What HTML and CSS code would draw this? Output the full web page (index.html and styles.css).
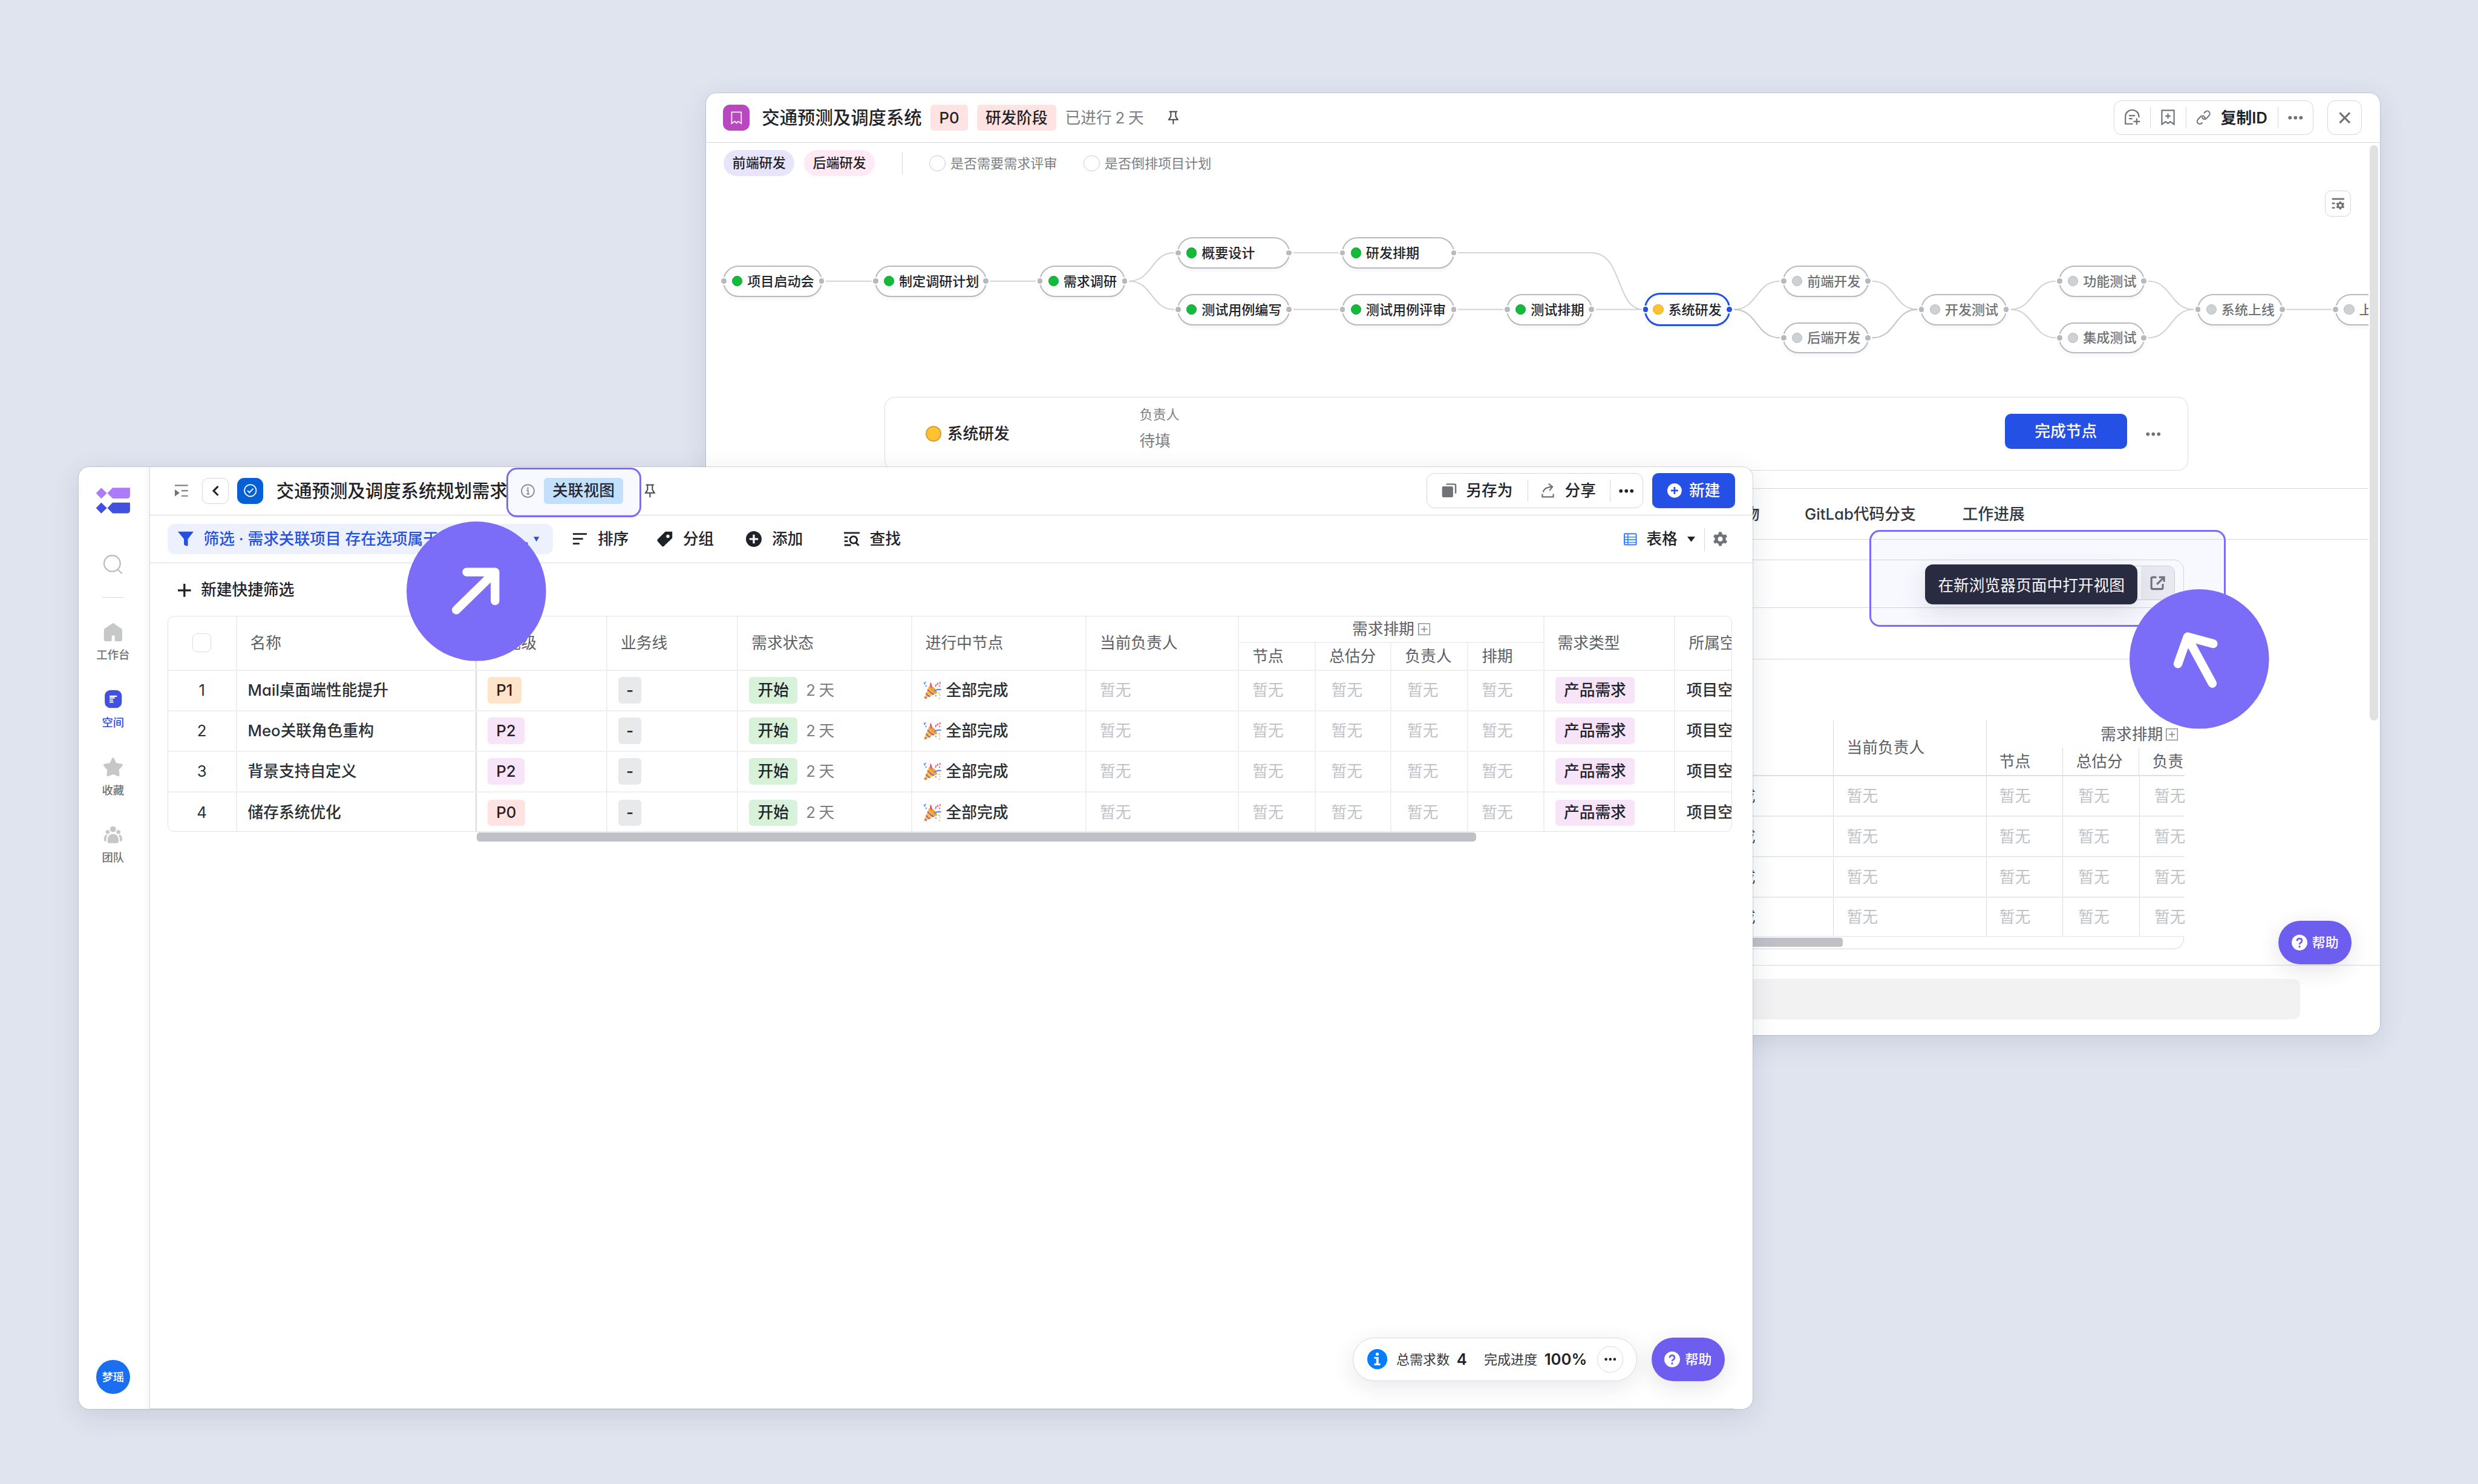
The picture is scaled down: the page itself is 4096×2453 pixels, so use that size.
FILE: index.html
```html
<!DOCTYPE html>
<html lang="zh-CN">
<head>
<meta charset="utf-8">
<title>交通预测及调度系统</title>
<link rel="stylesheet" href="styles.css">
</head>
<body>
<svg class="defs" aria-hidden="true">
  <symbol id="i-party" viewBox="0 0 42 42">
    <path d="M1 41 13 11Q27 17 31 27Z" fill="#fcc43b"/>
    <path d="M10 18Q17 27 25 30M6.500 27Q10 33 16 35M3.500 35Q5 38 8 39" fill="none" stroke="#a44fc4" stroke-width="2.600"/>
    <ellipse cx="22.500" cy="19" rx="5" ry="12" transform="rotate(-45 22.500 19)" fill="#f0a234"/>
    <path d="M17 13Q14 8 17 2Q21 7 20 16" fill="#ee4a72"/>
    <path d="M25 22Q33 17 41 19" fill="none" stroke="#4d8ff0" stroke-width="3"/>
    <path d="M2 2 4 7M6 9 7 12M5 1 6 3M28 32 30 34" stroke="#4d8ff0" stroke-width="2.600"/>
    <path d="M28 12 30 6M33 3 33 8M39 1 38 6M36 10 39 11" stroke="#f05a7e" stroke-width="2.600"/>
    <path d="M35 26 38 28M39 31 38 33M37 37 37 40" stroke="#f0a060" stroke-width="2.200"/>
  </symbol>
  <symbol id="i-pin" viewBox="0 0 28 34">
    <path d="M4 2H24M8 2V14L3 22H25L20 14V2M14 22V33" fill="none" stroke="currentColor" stroke-width="3"/>
  </symbol>
  <symbol id="i-dots" viewBox="0 0 34 10">
    <circle cx="4.500" cy="5" r="4"/><circle cx="17" cy="5" r="4"/><circle cx="29.500" cy="5" r="4"/>
  </symbol>
  <symbol id="i-plusbox" viewBox="0 0 28 28">
    <path d="M1 1H27V27H1ZM14 7V21M7 14H21" fill="none" stroke="#8f959c" stroke-width="2.400"/>
  </symbol>
  <symbol id="i-help" viewBox="0 0 36 36">
    <circle cx="18" cy="18" r="18" fill="#fff"/>
    <path d="M12.500 14.500Q12.500 9 18 9T23.500 14Q23.500 17 20.500 18.500Q18 20 18 22.500" fill="none" stroke="#6d5ef0" stroke-width="3.800"/>
    <circle cx="18" cy="27.500" r="2.400" fill="#6d5ef0"/>
  </symbol>
  <symbol id="i-gear" viewBox="0 0 32 32">
    <path fill-rule="evenodd" d="M13 0H19L20.200 4.600L24 6.800L28.700 5.500L31.700 10.500L28.400 14V18L31.700 21.500L28.700 26.500L24 25.200L20.200 27.400L19 32H13L11.800 27.400L8 25.200L3.300 26.500L.3 21.500L3.600 18V14L.3 10.500L3.300 5.500L8 6.800L11.800 4.600ZM16 10.500A5.500 5.500 0 1 0 16 21.500A5.500 5.500 0 1 0 16 10.500Z"/>
  </symbol>
</svg>

<!-- project detail window -->
<section class="window window-back">
  <header class="detail-head">
    <span class="app-icon purple"><svg viewBox="0 0 26 30"><path d="M2 2H24V28L17 23L13 27L9 23L2 28Z" fill="none" stroke="#fff" stroke-width="2.400"/></svg></span>
    <h1 class="title">交通预测及调度系统</h1>
    <span class="tag red">P0</span>
    <span class="tag red stage">研发阶段</span>
    <span class="elapsed">已进行 2 天</span>
    <svg class="pin"><use href="#i-pin"/></svg>
    <div class="btn-group detail-actions">
      <span class="seg s1"><svg class="ic38" viewBox="0 0 38 36"><path d="M20 33H3V16A15.500 15 0 0 1 34 16V18M11 14H25M11 21H19M29 20V35M21.500 27.500H36.500" fill="none" stroke="#6f7276" stroke-width="3"/></svg></span>
      <span class="seg s2"><svg class="ic32" viewBox="0 0 32 36"><path d="M2 2H30V34L21 28L16 32L11 28L2 34ZM16 9V21M10 15H22" fill="none" stroke="#6f7276" stroke-width="3"/></svg></span>
      <span class="seg s3"><svg class="ic34" viewBox="0 0 34 34"><g fill="none" stroke="#6f7276" stroke-width="2.800"><rect x="-6" y="-10.500" width="12" height="21" rx="6" transform="translate(11.500 22.500) rotate(42)" stroke-dasharray="46 9" stroke-dashoffset="-16"/><rect x="-6" y="-10.500" width="12" height="21" rx="6" transform="translate(22.500 11.500) rotate(42)" stroke-dasharray="46 9" stroke-dashoffset="14"/></g></svg>复制ID</span>
      <span class="seg s4"><svg class="dots gray"><use href="#i-dots"/></svg></span>
    </div>
    <span class="close"><svg viewBox="0 0 28 28"><path d="M2 2 26 26M26 2 2 26" stroke="#6f7276" stroke-width="4.400"/></svg></span>
  </header>
  <div class="detail-body">
    <div class="role-row">
      <span class="role lilac">前端研发</span>
      <span class="role pink">后端研发</span>
      <span class="vline"></span>
      <span class="option"><i></i>是否需要需求评审</span>
      <span class="option"><i></i>是否倒排项目计划</span>
    </div>
    <div class="flow">
      <svg class="links" viewBox="0 0 3814 489">
        <g fill="none" stroke="#d0d3d6" stroke-width="2.800">
          <path d="M275 223H380M652 223H757"/>
          <path d="M970 223C1025 223 1020 158 1074 158M970 223C1025 223 1020 288 1074 288"/>
          <path d="M1347 158H1451M1347 288H1451M1725 288H1829M2041 288H2150"/>
          <path d="M1725 158H2030C2105 158 2085 288 2150 288"/>
          <path d="M2358 288C2412 288 2408 223 2463 223"/>
          <path d="M2358 288C2412 288 2408 353 2463 353" stroke="#bfc2c7"/>
          <path d="M2675 223C2730 223 2725 288 2779 288"/>
          <path d="M2675 353C2730 353 2725 288 2779 288" stroke="#bfc2c7"/>
          <path d="M2992 288C3046 288 3042 223 3096 223M2992 288C3046 288 3042 353 3096 353"/>
          <path d="M3308 223C3362 223 3358 288 3413 288M3308 353C3362 353 3358 288 3413 288"/>
          <path d="M3625 288H3729"/>
        </g>
      </svg>
      <span class="node" style="--x:40;--y:223;--w:227"><i></i>项目启动会</span>
      <span class="node" style="--x:388;--y:223;--w:256"><i></i>制定调研计划</span>
      <span class="node" style="--x:765;--y:223;--w:197"><i></i>需求调研</span>
      <span class="node" style="--x:1082;--y:158;--w:257"><i></i>概要设计</span>
      <span class="node" style="--x:1082;--y:288;--w:257"><i></i>测试用例编写</span>
      <span class="node" style="--x:1459;--y:158;--w:258"><i></i>研发排期</span>
      <span class="node" style="--x:1459;--y:288;--w:258"><i></i>测试用例评审</span>
      <span class="node" style="--x:1837;--y:288;--w:196"><i></i>测试排期</span>
      <span class="node active" style="--x:2153;--y:288;--w:197"><i></i>系统研发</span>
      <span class="node todo" style="--x:2471;--y:223;--w:196"><i></i>前端开发</span>
      <span class="node todo" style="--x:2471;--y:353;--w:196"><i></i>后端开发</span>
      <span class="node todo" style="--x:2787;--y:288;--w:197"><i></i>开发测试</span>
      <span class="node todo" style="--x:3104;--y:223;--w:196"><i></i>功能测试</span>
      <span class="node todo" style="--x:3104;--y:353;--w:196"><i></i>集成测试</span>
      <span class="node todo" style="--x:3421;--y:288;--w:196"><i></i>系统上线</span>
      <span class="node todo" style="--x:3737;--y:288;--w:196"><i></i>上线验收</span>
      <span class="flow-setting"><svg viewBox="0 0 32 28"><path d="M1 2.500H31M1 13H8M1 24H8" stroke="#6f7276" stroke-width="4"/><g transform="translate(11 8) scale(.64)" fill="#6f7276"><use href="#i-gear" width="32" height="32"/></g></svg></span>
    </div>
    <div class="stage-card">
      <i class="stage-dot"></i>
      <b class="stage-name">系统研发</b>
      <div class="owner"><span>负责人</span><em>待填</em></div>
      <span class="finish">完成节点</span>
      <svg class="dots gray"><use href="#i-dots"/></svg>
    </div>
    <nav class="tabs"><span>交付物</span><span>GitLab代码分支</span><span>工作进展</span></nav>
    <div class="panel">
      <div class="panel-bar">
        <span class="open-btn"><svg viewBox="0 0 36 34"><path d="M15 3H6Q3 3 3 6V28Q3 31 6 31H27Q30 31 30 28V19M21 3H33V14M33 3 16 20" fill="none" stroke="#6f7276" stroke-width="4.500"/></svg></span>
      </div>
      <div class="panel-sub"></div>
      <div class="mini">
        <div class="mini-head"><span></span><span></span><span class="tall">当前负责人</span>
          <div class="mini-group"><div class="mini-top">需求排期<svg class="plusbox"><use href="#i-plusbox"/></svg></div>
            <div class="mini-subs"><span>节点</span><span>总估分</span><span>负责人</span></div></div>
        </div>
        <div class="mini-row"><span></span><span class="done"><svg><use href="#i-party"/></svg>全部完成</span><span>暂无</span><span>暂无</span><span>暂无</span><span>暂无</span></div>
        <div class="mini-row"><span></span><span class="done"><svg><use href="#i-party"/></svg>全部完成</span><span>暂无</span><span>暂无</span><span>暂无</span><span>暂无</span></div>
        <div class="mini-row"><span></span><span class="done"><svg><use href="#i-party"/></svg>全部完成</span><span>暂无</span><span>暂无</span><span>暂无</span><span>暂无</span></div>
        <div class="mini-row"><span></span><span class="done"><svg><use href="#i-party"/></svg>全部完成</span><span>暂无</span><span>暂无</span><span>暂无</span><span>暂无</span></div>
      </div>
      <div class="mini-scroll"></div>
    </div>
    <i class="vscroll"></i>
  </div>
  <footer class="comment"><div></div></footer>
  <span class="help"><svg><use href="#i-help"/></svg>帮助</span>
  <span class="tooltip">在新浏览器页面中打开视图</span>
  <span class="halo halo-open"></span>
</section>
<svg class="badge badge-right" viewBox="0 0 320 320"><circle cx="160" cy="160" r="160"/><path d="M190 216 133 111M111 171 133 109 192 125"/></svg>

<!-- related view window -->
<section class="window window-front">
  <aside class="side">
    <svg class="logo" viewBox="0 0 80 60"><path d="M1 13 13 .5 26 13 13 25.500ZM27 13 39 .5H79V19Q78 25 72 25H39Z" fill="#ab7bfb"/><path d="M1 47 13 34.500 26 47 13 59.500ZM27 47 39 34.500H79V53Q78 59 72 59H39Z" fill="#4150de"/></svg>
    <svg class="search" viewBox="0 0 44 44"><circle cx="20" cy="20" r="18.500" fill="none" stroke="#b6b9bf" stroke-width="3"/><path d="M32 33 42.500 43" stroke="#b6b9bf" stroke-width="3"/></svg>
    <i class="side-line"></i>
    <div class="side-item"><svg viewBox="0 0 44 44"><path d="M22 1 41 14Q43 15.500 43 18V39Q43 43 39 43H28Q26 43 26 41V30H19V41Q19 43 17 43H5Q1 43 1 39V18Q1 15.500 3 14Z" fill="#c6c7c9"/></svg><span>工作台</span></div>
    <div class="side-item on"><svg viewBox="0 0 44 44"><rect x="3" y="1" width="39" height="41" rx="13" fill="#4150de"/><path d="M14 15H31M14 19H26M14 24H22M14 28.500H23" stroke="#fff" stroke-width="3"/></svg><span>空间</span></div>
    <div class="side-item"><svg viewBox="0 0 44 44"><path d="M20 1.500Q22-1 24 1.500L29.500 13 42 15Q46 16.500 43 20L35.500 28.500 37 41Q36.500 44 33 43L22 39 11 43Q7.500 44 7.500 41L8.500 28.500 1 20Q-1.500 16.500 2 15L14.500 13Z" fill="#c6c7c9"/></svg><span>收藏</span></div>
    <div class="side-item"><svg viewBox="0 0 48 44"><g fill="#c6c7c9"><circle cx="24" cy="8" r="7.500"/><circle cx="10.500" cy="15" r="5"/><circle cx="37.500" cy="15" r="5"/><path d="M10 38Q10 20 24 20T38 38Q38 43 33 43H15Q10 43 10 38ZM10 22Q6 30 7 38H2Q-1 28 6 22ZM38 22Q42 30 41 38H46Q49 28 42 22Z"/></g></svg><span>团队</span></div>
    <span class="avatar">梦瑶</span>
  </aside>
  <main class="main">
    <header class="view-head">
      <svg class="fold" viewBox="0 0 30 28"><path d="M0 2H30M15 14H30M15 26H30" stroke="#7d8084" stroke-width="3"/><path d="M0 11 11 19 0 27Z" fill="#6f7276"/></svg>
      <span class="back"><svg viewBox="0 0 16 26"><path d="M14 2 3 13 14 24" fill="none" stroke="#1f2329" stroke-width="4.500"/></svg></span>
      <span class="app-icon blue"><svg viewBox="0 0 30 30"><circle cx="15" cy="15" r="13.500" fill="none" stroke="#fff" stroke-width="2.400"/><path d="M8.500 15 13 19.500 21.500 10.500" fill="none" stroke="#fff" stroke-width="2.600"/></svg></span>
      <h1 class="title">交通预测及调度系统规划需求</h1>
      <svg class="info" viewBox="0 0 32 32"><circle cx="16" cy="16" r="14.500" fill="none" stroke="#85888c" stroke-width="2.400"/><path d="M13 14H16.500V23M13 23H20" fill="none" stroke="#85888c" stroke-width="2.400"/><circle cx="16" cy="9.500" r="1.900" fill="#85888c"/></svg>
      <span class="tag sky">关联视图</span>
      <svg class="pin"><use href="#i-pin"/></svg>
      <div class="btn-group view-actions">
        <span class="seg a1"><svg viewBox="0 0 34 34"><path d="M11 2H30Q33 2 33 5V24" fill="none" stroke="#6f7276" stroke-width="3.500"/><rect x="1" y="7" width="26" height="26" rx="3" fill="#6f7276"/></svg>另存为</span>
        <span class="seg a2"><svg viewBox="0 0 32 34"><path d="M4 21Q6 9 26 8M17 1 26 8 19 17M2 25V32H28V25" fill="none" stroke="#6f7276" stroke-width="3.200"/></svg>分享</span>
        <span class="seg a3"><svg class="dots"><use href="#i-dots"/></svg></span>
      </div>
      <span class="create"><svg viewBox="0 0 32 32"><circle cx="16" cy="16" r="16" fill="#fff"/><path d="M16 8V24M8 16H24" stroke="#2450e5" stroke-width="3.600"/></svg>新建</span>
    </header>
    <div class="toolbar">
      <div class="filter"><svg class="funnel" viewBox="0 0 36 36"><path d="M0 1H36L23 18V33Q21 36 14 31V18Z" fill="#2450e5"/></svg><span class="filter-text">筛选 · 需求关联项目 存在选项属于 交通预测</span><span class="more-text">...</span><svg class="caret" viewBox="0 0 14 12"><path d="M0 0H14L7 12Z" fill="#2450e5"/></svg></div>
      <span class="tool t1"><svg viewBox="0 0 36 36"><path d="M0 5H36M0 17.500H26M0 30H17" stroke="#1f2329" stroke-width="4.600"/></svg>排序</span>
      <span class="tool t2"><svg viewBox="0 0 36 36"><path fill-rule="evenodd" d="M19 1H35L35 16L15 35Q13 36 11 34L1 23Q0 21 1 19ZM25 8A3.800 3.800 0 1 0 25 15.600A3.800 3.800 0 1 0 25 8Z" fill="#1f2329"/></svg>分组</span>
      <span class="tool t3"><svg viewBox="0 0 36 36"><circle cx="18" cy="18" r="18" fill="#1f2329"/><path d="M18 8V28M8 18H28" stroke="#fff" stroke-width="4.400"/></svg>添加</span>
      <span class="tool t4"><svg viewBox="0 0 36 36"><g fill="none" stroke="#1f2329" stroke-width="4"><path d="M0 4H36M1 14H9M1 23H9M1 32H16"/><circle cx="22" cy="20" r="8"/><path d="M27 26 34 33"/></g></svg>查找</span>
      <span class="mode"><svg class="grid-ic" viewBox="0 0 32 30"><rect x="1.500" y="1.500" width="29" height="27" rx="2" fill="none" stroke="#3d7ff5" stroke-width="3"/><path d="M1 9.500H31M1 16H31M1 22.500H31M10 2V29" stroke="#3d7ff5" stroke-width="2.500"/></svg>表格<svg class="caret big" viewBox="0 0 18 12"><path d="M0 0H18L9 12Z" fill="#1f2329"/></svg></span>
      <svg class="gear"><use href="#i-gear"/></svg>
    </div>
    <div class="quick"><svg viewBox="0 0 30 30"><path d="M15 0V30M0 15H30" stroke="#1f2329" stroke-width="4.600"/></svg>新建快捷筛选</div>
    <div class="table">
      <div class="row head">
        <span class="c-check"><i></i></span><span class="c-name">名称</span><span>优先级</span><span>业务线</span><span>需求状态</span><span>进行中节点</span><span>当前负责人</span>
        <div class="group"><div class="group-top">需求排期<svg class="plusbox"><use href="#i-plusbox"/></svg></div>
          <div class="group-subs"><span>节点</span><span>总估分</span><span>负责人</span><span>排期</span></div></div>
        <span>需求类型</span><span>所属空间</span>
      </div>
      <div class="row"><span class="c-no">1</span><span class="c-title">Mail桌面端性能提升</span><span class="c-tag"><b class="tag orange">P1</b></span><span class="c-tag"><b class="tag dash">-</b></span><span class="c-tag"><b class="tag green">开始</b><em>2 天</em></span><span class="done"><svg><use href="#i-party"/></svg>全部完成</span><span class="none">暂无</span><span class="none">暂无</span><span class="none in">暂无</span><span class="none in">暂无</span><span class="none">暂无</span><span class="c-tag"><b class="tag rose">产品需求</b></span><span class="space">项目空间</span></div>
      <div class="row"><span class="c-no">2</span><span class="c-title">Meo关联角色重构</span><span class="c-tag"><b class="tag rose">P2</b></span><span class="c-tag"><b class="tag dash">-</b></span><span class="c-tag"><b class="tag green">开始</b><em>2 天</em></span><span class="done"><svg><use href="#i-party"/></svg>全部完成</span><span class="none">暂无</span><span class="none">暂无</span><span class="none in">暂无</span><span class="none in">暂无</span><span class="none">暂无</span><span class="c-tag"><b class="tag rose">产品需求</b></span><span class="space">项目空间</span></div>
      <div class="row"><span class="c-no">3</span><span class="c-title">背景支持自定义</span><span class="c-tag"><b class="tag rose">P2</b></span><span class="c-tag"><b class="tag dash">-</b></span><span class="c-tag"><b class="tag green">开始</b><em>2 天</em></span><span class="done"><svg><use href="#i-party"/></svg>全部完成</span><span class="none">暂无</span><span class="none">暂无</span><span class="none in">暂无</span><span class="none in">暂无</span><span class="none">暂无</span><span class="c-tag"><b class="tag rose">产品需求</b></span><span class="space">项目空间</span></div>
      <div class="row"><span class="c-no">4</span><span class="c-title">储存系统优化</span><span class="c-tag"><b class="tag red">P0</b></span><span class="c-tag"><b class="tag dash">-</b></span><span class="c-tag"><b class="tag green">开始</b><em>2 天</em></span><span class="done"><svg><use href="#i-party"/></svg>全部完成</span><span class="none">暂无</span><span class="none">暂无</span><span class="none in">暂无</span><span class="none in">暂无</span><span class="none">暂无</span><span class="c-tag"><b class="tag rose">产品需求</b></span><span class="space">项目空间</span></div>
    </div>
    <i class="hscroll"></i>
    <i class="end-line"></i>
    <div class="summary"><svg class="info-fill" viewBox="0 0 46 46"><circle cx="23" cy="23" r="23" fill="#067dfd"/><path d="M16 18H26V33H30V37H16V33H20.500V22H16Z" fill="#fff"/><circle cx="23" cy="11.500" r="3.600" fill="#fff"/></svg><span>总需求数</span><b>4</b><span class="prog">完成进度</span><b>100%</b><span class="more"><svg class="dots"><use href="#i-dots"/></svg></span></div>
    <span class="help"><svg><use href="#i-help"/></svg>帮助</span>
  </main>
  <span class="halo halo-tag"></span>
</section>
<svg class="badge badge-left" viewBox="0 0 320 320"><circle cx="160" cy="160" r="160"/><path d="M114 203 203 116M138 116H203V182"/></svg>
</body>
</html>
```
FILE: styles.css
```css
/* 1rem = 100 design pixels on a 5684-wide artboard */
html { font-size: calc(100vw / 56.84); }
* { box-sizing: border-box; }
body {
  margin: 0; width: 56.84rem; height: 34.04rem; position: relative; overflow: hidden;
  background: #e0e4ef; color: #1f2329;
  font: 400 .357rem/1 Inter, "Noto Sans CJK SC", sans-serif;
  font-feature-settings: "cv11";
}
h1, b, em, i { margin: 0; font-style: normal; font-weight: inherit; font-size: inherit; }
svg { display: block; flex: none; overflow: visible; }
span, div, h1 { white-space: nowrap; }
.defs { position: absolute; width: 0; height: 0; }

/* windows */
.window {
  position: absolute; width: 38.4rem; height: 21.61rem; background: #fff; border-radius: .24rem;
  box-shadow: 0 0 0 1px rgba(150, 157, 180, .4), 0 .16rem .6rem rgba(60, 80, 120, .14);
}
.window-back { left: 16.19rem; top: 2.14rem; display: flex; flex-direction: column; }
.window-front { left: 1.8rem; top: 10.71rem; display: flex; overflow: visible;
  box-shadow: 0 0 0 1px rgba(140, 145, 165, .32), 0 .16rem .6rem rgba(60, 70, 100, .14); }

.title { font-weight: 500; font-size: .408rem; }
.app-icon { width: .6rem; height: .6rem; border-radius: .16rem; display: flex; align-items: center; justify-content: center; }
.app-icon.purple { background: #b948c0; }
.app-icon.purple svg { width: .26rem; height: .3rem; }
.app-icon.blue { background: #0460d4; margin-left: .2rem; }
.app-icon.blue svg { width: .3rem; height: .3rem; }
.tag { height: .6rem; padding: 0 .2rem; border-radius: .08rem; display: inline-flex; align-items: center; font-weight: 500; color: #1f2329; }
.red { background: #ffe3e2; }
.orange { background: #fee4c8; }
.rose { background: #f8e4f9; }
.green { background: #d7f2d8; }
.dash { background: #e8e9ea; width: .53rem; justify-content: center; padding: 0; }
.sky { background: #c7e6fc; }
.btn-group { display: flex; border: .025rem solid #d5d7db; border-radius: .18rem; margin-left: auto; }
.seg { display: flex; align-items: center; justify-content: center; font-weight: 500; position: relative; }
.seg + .seg::before { content: ""; position: absolute; left: 0; top: 50%; height: .5rem; margin-top: -.25rem; border-left: .025rem solid #d5d7db; }
.dots { width: .34rem; height: .1rem; fill: #1f2329; }
.dots.gray { fill: #6f7276; }
.pin { width: .26rem; height: .32rem; color: #44484d; }
.plusbox { width: .28rem; height: .28rem; }

/* detail window header */
.detail-head { height: 1.13rem; flex: none; border-bottom: .025rem solid #d6d8dc; display: flex; align-items: center; padding: 0 .41rem 0 .4rem; }
.detail-head .title { margin-left: .285rem; }
.detail-head .red { margin-left: .2rem; }
.elapsed { margin-left: .2rem; color: #7b7e82; word-spacing: -.02rem; }
.detail-head .pin { margin-left: .54rem; }
.detail-actions { width: 4.58rem; height: .78rem; }
.s1 { width: .81rem; } .s2 { width: .83rem; } .s3 { width: 2.1rem; font-weight: 600; gap: .22rem; } .s4 { flex: 1; }
.ic38 { width: .38rem; height: .36rem; } .ic32 { width: .32rem; height: .36rem; } .ic34 { width: .34rem; height: .34rem; }
.close { width: .79rem; height: .78rem; margin-left: .32rem; border: .025rem solid #d5d7db; border-radius: .18rem; display: flex; align-items: center; justify-content: center; }
.close svg { width: .27rem; height: .27rem; }

.detail-body { flex: 1; position: relative; overflow: hidden; }
.role-row { height: .95rem; display: flex; align-items: center; padding-left: .41rem; font-size: .306rem; }
.role { height: .6rem; border-radius: .3rem; padding: 0 .2rem .02rem; margin-right: .22rem; display: flex; align-items: center; font-weight: 500; }
.lilac { background: #e7e5fc; } .pink { background: #ffe9f5; }
.vline { height: .5rem; margin-left: .41rem; border-left: .025rem solid #d5d7db; }
.option { display: flex; align-items: center; margin-left: .61rem; color: #7b7e82; }
.option i { width: .37rem; height: .37rem; border: .025rem solid #c9ccd0; border-radius: 50%; margin-right: .11rem; }

.flow { position: relative; width: 38.14rem; height: 4.89rem; overflow: hidden; }
.links { position: absolute; left: 0; top: 0; width: 38.14rem; height: 4.89rem; }
.node {
  --ink: #b6b9bf;
  position: absolute; left: calc(var(--x) * .01rem); top: calc(var(--y) * .01rem - .36rem); width: calc(var(--w) * .01rem); height: .72rem;
  border: .03rem solid var(--ink); border-radius: .36rem; background: #fff; display: flex; align-items: center; padding-left: .175rem;
  font-size: .306rem; font-weight: 500; color: #1f2329; box-shadow: 0 .04rem .1rem rgba(0, 0, 0, .05);
}
.node i { width: .24rem; height: .24rem; border-radius: 50%; background: #14bb3b; border: .025rem solid #07a32a; margin-right: .11rem; }
.node::before, .node::after {
  content: ""; position: absolute; top: 50%; width: .12rem; height: .12rem; margin-top: -.06rem; border-radius: 50%;
  background: var(--ink); box-shadow: 0 0 0 .03rem #fff;
}
.node::before { left: -.075rem; } .node::after { right: -.075rem; }
.node.active { --ink: #2450e5; border-width: .05rem; height: .76rem; margin-top: -.02rem; padding-left: .155rem; }
.node.active i { background: #ffc233; border-color: #e9a91c; }
.node.todo { color: #6f7276; }
.node.todo i { background: #cdd1d4; border-color: #b5b9bd; }
.flow-setting { position: absolute; left: 37.14rem; top: .15rem; width: .6rem; height: .6rem; border: .025rem solid #d5d7db; border-radius: .14rem; display: flex; align-items: center; justify-content: center; }
.flow-setting svg { width: .3rem; height: .27rem; }

.stage-card { margin-left: 4.1rem; width: 29.91rem; height: 1.69rem; border: .025rem solid #d9dbdf; border-radius: .24rem; display: flex; align-items: center; }
.stage-dot { width: .36rem; height: .36rem; margin-left: .93rem; border-radius: 50%; background: #ffc233; border: .028rem solid #d99f2b; }
.stage-name { margin-left: .135rem; font-weight: 500; }
.owner { margin-left: 2.98rem; width: 2rem; display: flex; flex-direction: column; gap: .28rem; color: #7b7e82; margin-top: -.27rem; }
.owner span { font-size: .306rem; }
.finish { width: 2.8rem; height: .8rem; margin: -.12rem .43rem 0 auto; border-radius: .14rem; background: #2450e5; color: #fff; font-weight: 500; display: flex; align-items: center; justify-content: center; }
.stage-card .dots { margin-right: .63rem; }

.tabs { margin-top: .4rem; width: 38.14rem; height: 1.18rem; border: solid #d6d8dc; border-width: .025rem 0; display: flex; align-items: center; padding-left: 23.1rem; font-weight: 500; color: #33373d; }
.tabs span + span { margin-left: 1.035rem; }
.tabs span:last-child { margin-left: 1.07rem; }
.panel { margin: .45rem 0 0 4.1rem; width: 29.81rem; height: 8.95rem; border: .025rem solid #d6d8dc; border-radius: .24rem; }
.panel-bar { height: 1.1rem; border-bottom: .025rem solid #d6d8dc; display: flex; align-items: center; justify-content: flex-end; padding: 0 .2rem .03rem 0; }
.open-btn { width: 2.2rem; height: .78rem; border: .025rem solid #d0d2d8; border-radius: .16rem; background: linear-gradient(90deg, #fff 65%, #efeff2 65%); display: flex; align-items: center; justify-content: flex-end; padding-right: .2rem; }
.open-btn svg { width: .35rem; height: .33rem; }
.panel-sub { height: 1.18rem; border-bottom: .025rem solid #d6d8dc; }
.mini { position: relative; margin: 1.41rem -.03rem 0 0; background: #fff; height: 4.96rem; overflow: hidden; }
.mini-head, .mini-row { display: grid; grid-template-columns: 1fr 4rem 3.5rem 1.76rem 1.75rem 1.04rem; }
.mini-head { grid-template-columns: 1fr 4rem 3.5rem 4.55rem; height: 1.27rem; border-bottom: .03rem solid #dfe0e3; color: #5c6066; }
.mini-row { height: .93rem; border-bottom: .03rem solid #e9eaec; color: #bfc2c7; }
.mini-row:last-child { height: .9rem; border-bottom-color: #efeff1; }
.mini span { border-right: .025rem solid #d9dade; display: flex; align-items: center; padding-left: .295rem; overflow: hidden; }
.mini-row span:nth-child(5) { padding-left: .345rem; }
.mini-row span:last-child, .mini-subs span:last-child { border-right: 0; padding-left: .295rem; }
.mini-row span:last-child { padding-left: .34rem; }
.mini-group { display: flex; flex-direction: column; overflow: hidden; }
.mini-top { height: .62rem; flex: none; display: flex; align-items: center; padding-left: 2.62rem; gap: .07rem; }
.mini-subs { flex: 1; display: grid; grid-template-columns: 1.76rem 1.75rem 1.04rem; }
.mini .done { padding-left: .25rem; color: #2b2f36; }
.mini-scroll { position: relative; width: 21.96rem; height: .2rem; margin-top: .02rem; border-radius: 0 .06rem .06rem 0; background: #c0c1c7; }
.vscroll { position: absolute; right: .04rem; top: .06rem; width: .2rem; height: 13.2rem; border-radius: .1rem; background: #dfe1e2; }
.comment { flex: none; height: 1.62rem; border-top: .025rem solid #d6d8dc; padding-top: .31rem; }
.comment div { width: 34.57rem; margin-left: 2rem; height: .93rem; border-radius: .16rem; background: #f2f2f3; }

.help { position: absolute; width: 1.68rem; height: 1rem; border-radius: .5rem; background: #6d5ef0; color: #fff; font-size: .306rem; font-weight: 500; display: flex; align-items: center; gap: .11rem; padding-left: .3rem; box-shadow: 0 .12rem .5rem rgba(30, 30, 60, .12); }
.help svg { width: .36rem; height: .36rem; }
.window-back .help { left: 36.07rem; top: 18.98rem; }
.window-front .help { right: .64rem; bottom: .64rem; }

.tooltip { position: absolute; left: 27.97rem; top: 10.81rem; width: 4.87rem; height: .91rem; border-radius: .18rem; background: #252836; color: #fff; display: flex; align-items: center; justify-content: center; box-shadow: 0 .2rem .6rem rgba(40, 30, 60, .12); padding-top: .04rem; }
.halo { position: absolute; border: .05rem solid #7b6cf6; border-radius: .24rem; background: rgba(123, 108, 246, .05); }
.halo-open { left: 26.69rem; top: 10.02rem; width: 8.18rem; height: 2.22rem; }
.halo-tag { left: 9.82rem; top: .02rem; width: 3.09rem; height: 1.13rem; }
.badge { position: absolute; width: 3.2rem; height: 3.2rem; }
.badge circle { fill: #7b6df7; }
.badge path { fill: none; stroke: #fff; stroke-width: 20; stroke-linecap: round; stroke-linejoin: round; }
.badge-right { left: 48.85rem; top: 13.52rem; }
.badge-left { left: 9.33rem; top: 11.96rem; }

/* related view: sidebar */
.side { width: 1.64rem; flex: none; border-right: .025rem solid #d6d8dc; border-radius: .24rem 0 0 .24rem; box-shadow: inset -.14rem 0 .14rem -.1rem rgba(0, 0, 0, .05); display: flex; flex-direction: column; align-items: center; padding: .47rem .04rem .35rem 0; }
.logo { width: .8rem; height: .6rem; }
.search { width: .44rem; height: .44rem; margin-top: .94rem; }
.side-line { width: .5rem; border-top: .025rem solid #d6d8dc; margin: .54rem 0 .56rem; }
.side-item { height: 1.55rem; display: flex; flex-direction: column; align-items: center; gap: .18rem; font-size: .255rem; color: #6f7276; }
.side-item svg { width: .44rem; height: .44rem; }
.side-item span { font-weight: 500; }
.side-item.on { color: #2450e5; }
.avatar { margin-top: auto; width: .77rem; height: .77rem; border-radius: 50%; background: #1a6ff0; color: #fff; font-size: .255rem; font-weight: 500; display: flex; align-items: center; justify-content: center; }

/* related view: header and toolbar */
.main { flex: 1; min-width: 0; position: relative; display: flex; flex-direction: column; }
.view-head { height: 1.11rem; flex: none; border-bottom: .025rem solid #d6d8dc; display: flex; align-items: center; padding: 0 .4rem 0 .57rem; }
.fold { width: .3rem; height: .28rem; }
.back { width: .6rem; height: .6rem; margin-left: .33rem; border: .025rem solid #d5d7db; border-radius: .14rem; display: flex; align-items: center; justify-content: center; }
.back svg { width: .15rem; height: .26rem; }
.view-head .title { margin-left: .3rem; }
.info { width: .32rem; height: .32rem; margin-left: .31rem; }
.sky { margin-left: .2rem; }
.view-head .pin { margin-left: .48rem; }
.view-actions { width: 4.97rem; height: .8rem; }
.seg.a1, .seg.a2 { gap: .23rem; }
.a1 { width: 2.3rem; } .a2 { width: 1.89rem; } .a3 { flex: 1; }
.a1 svg { width: .33rem; height: .33rem; } .a2 svg { width: .31rem; height: .33rem; }
.create { width: 1.9rem; height: .8rem; margin-left: .21rem; border-radius: .14rem; background: #2450e5; color: #fff; font-weight: 500; display: flex; align-items: center; justify-content: center; gap: .17rem; }
.create svg { width: .33rem; height: .33rem; }
.toolbar { height: 1.1rem; flex: none; border-bottom: .025rem solid #d6d8dc; display: flex; align-items: center; padding: .01rem .58rem 0 .4rem; font-weight: 500; }
.filter { width: 8.84rem; height: .7rem; border-radius: .16rem; background: #edf1fd; color: #2450e5; display: flex; align-items: center; padding-left: .24rem; }
.funnel { width: .36rem; height: .36rem; }
.filter-text { margin-left: .23rem; width: 7.14rem; flex: none; line-height: .5rem; overflow: hidden; }
.more-text { width: .33rem; flex: none; }
.caret { width: .13rem; height: .12rem; margin-left: .1rem; }
.caret.big { width: .18rem; margin-left: .22rem; }
.tool { display: flex; align-items: center; }
.tool svg { width: .36rem; height: .36rem; margin-right: .23rem; }
.t1 { margin-left: .46rem; } .t2 { margin-left: .65rem; } .t3 { margin-left: .74rem; } .t4 { margin-left: .94rem; }
.tool.t1 svg { width: .32rem; margin-right: .25rem; }
.mode { margin-left: auto; display: flex; align-items: center; padding-right: .21rem; height: .54rem; border-right: .025rem solid #d5d7db; }
.grid-ic { width: .3rem; height: .29rem; margin-right: .22rem; }
.gear { width: .32rem; height: .33rem; margin-left: .2rem; fill: #6f7276; }
.quick { height: 1.2rem; flex: none; display: flex; align-items: center; padding: .03rem 0 0 .64rem; font-weight: 500; gap: .23rem; }
.quick svg { width: .3rem; height: .3rem; }

/* table */
.table { position: relative; margin-left: .4rem; width: 35.89rem; height: 4.96rem; flex: none; border: .025rem solid #e2e4e6; border-radius: .16rem; overflow: hidden; color: #2b2f36; }
.row { display: grid; grid-template-columns: 1.58rem 5.5rem 3rem 3rem 3.99rem 4rem 3.5rem 1.76rem 1.74rem 1.76rem 1.74rem 3.01rem 3.5rem; height: .93rem; border-bottom: .03rem solid #eff0f1; }
.row:last-child { border-bottom: 0; }
.row span { border-right: .03rem solid #eeeff0; display: flex; align-items: center; padding-left: .305rem; overflow: hidden; }
.row > :nth-child(2) { border-right: .035rem solid #d9dadd; }
.row.head { grid-template-columns: 1.58rem 5.5rem 3rem 3rem 3.99rem 4rem 3.5rem 7rem 3.01rem 3.5rem; height: 1.25rem; color: #5c6066; }
.row .c-check, .row .c-no { padding: 0; justify-content: center; }
.c-check i { width: .43rem; height: .43rem; border: .025rem solid #dcdee1; border-radius: .11rem; }
.group { display: flex; flex-direction: column; }
.group-top { height: .62rem; flex: none; border: solid #eeeff0; border-width: 0 .03rem .03rem 0; display: flex; align-items: center; justify-content: center; gap: .08rem; }
.group-subs { flex: 1; display: grid; grid-template-columns: 1.76rem 1.74rem 1.76rem 1.74rem; }
.row .c-title { padding-left: .25rem; font-weight: 500; }
.row .c-tag { padding-left: .25rem; }
.c-tag em { margin-left: .19rem; color: #7b7e82; word-spacing: -.02rem; }
.done svg { width: .42rem; height: .43rem; margin-right: .1rem; }
.row .done, .row .space { padding-left: .255rem; font-weight: 500; }
.row .none { color: #bfc2c7; }
.row .none.in { padding-left: .355rem; }
.hscroll { margin: .02rem 0 0 7.5rem; width: 22.92rem; height: .2rem; border-radius: .07rem; background: #c0c1c7; }
.end-line { margin-top: auto; width: 36.33rem; border-bottom: .025rem solid #d6d7dc; }
.summary { position: absolute; right: 2.65rem; bottom: .64rem; width: 6.52rem; height: 1rem; border: .025rem solid #d9dbdf; border-radius: .5rem; background: #fff; display: flex; align-items: center; padding: 0 .3rem 0 .32rem; box-shadow: 0 .12rem .5rem rgba(30, 30, 60, .1); }
.info-fill { width: .46rem; height: .46rem; margin-right: .205rem; }
.summary span { font-size: .306rem; color: #33373d; }
.summary b { font-weight: 600; margin-left: .16rem; }
.summary .prog { margin-left: .39rem; }
.summary .more { width: .6rem; height: .6rem; margin-left: auto; border: .025rem solid #d9dbdf; border-radius: 50%; display: flex; align-items: center; justify-content: center; }
.more .dots { width: .27rem; height: .08rem; }
```
